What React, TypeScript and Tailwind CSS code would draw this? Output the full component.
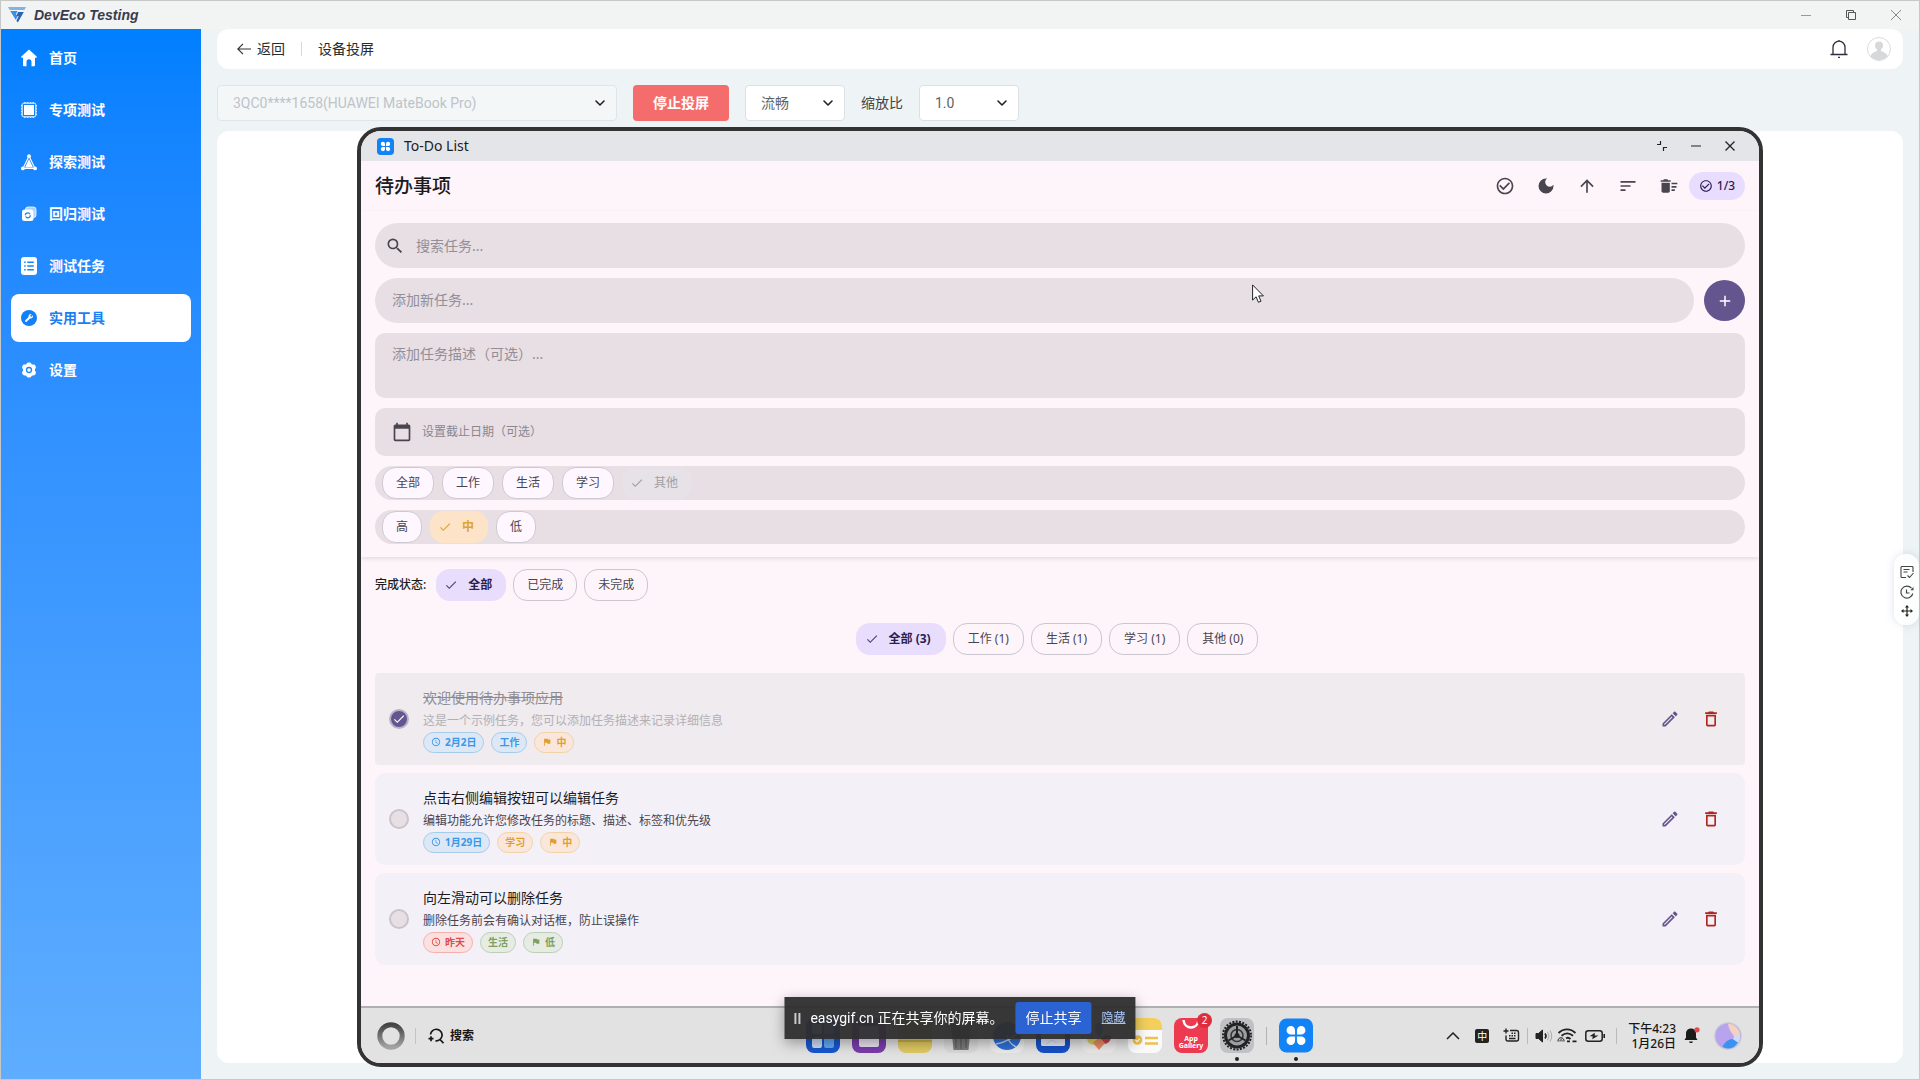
import React from "react";
import {
  MdAccessTime,
  MdAdd,
  MdArrowUpward,
  MdCalendarToday,
  MdCheck,
  MdCheckCircleOutline,
  MdDarkMode,
  MdDeleteOutline,
  MdDeleteSweep,
  MdFlag,
  MdOutlineEdit,
  MdSearch,
  MdSort,
} from "react-icons/md";
import { FaWrench } from "react-icons/fa";
import { ChevronDown } from "lucide-react";

type IconProps = { className?: string };

/* ---------- sidebar icons ---------- */

function HomeIcon() {
  return (
    <svg viewBox="0 0 16 18" className="h-[18px] w-4" fill="currentColor">
      <path d="M8 .6 15.6 7.4c.6.6.3 1.3-.5 1.3H14v7.6c0 .5-.3.9-.9.9h-2.6v-4.4a2.5 2.5 0 0 0-5 0v4.4H2.9c-.6 0-.9-.4-.9-.9V8.7H.9c-.8 0-1.1-.7-.5-1.3z" />
    </svg>
  );
}

function ChipIcon() {
  return (
    <svg viewBox="0 0 16 16" className="h-4 w-4" fill="none" stroke="currentColor">
      <rect x="1.2" y="1.2" width="13.6" height="13.6" rx="1.5" strokeWidth="1" />
      <rect x="3" y="3" width="10" height="10" fill="currentColor" stroke="none" />
      <path d="M3 .4h1.6M6 .4h1.4M8.8.4h1.4M11.6.4H13M3 15.6h1.6M6 15.6h1.4M8.8 15.6h1.4M11.6 15.6H13M.4 3v1.6M.4 6v1.4M.4 8.8v1.4M.4 11.6V13M15.6 3v1.6M15.6 6v1.4M15.6 8.8v1.4M15.6 11.6V13" strokeWidth=".8" />
    </svg>
  );
}

function ExploreIcon() {
  return (
    <svg viewBox="0 0 16 17" className="h-[17px] w-4" fill="currentColor">
      <path d="M8 2 14 14.4H2z" fill="none" stroke="currentColor" strokeWidth="1.1" />
      <path d="M8 5 12 13.400H4z" />
      <circle cx="8" cy="2.200" r="1.900" />
      <circle cx="1.900" cy="14.400" r="1.900" />
      <circle cx="14.100" cy="14.400" r="1.900" />
    </svg>
  );
}

function RegressionIcon() {
  return (
    <svg viewBox="0 0 16 16" className="h-4 w-4">
      <rect x="4.5" y="1" width="10.5" height="10.5" rx="2.5" fill="#a9d1ff" stroke="white" strokeWidth=".8" />
      <rect x="1" y="3.5" width="11.5" height="11.5" rx="2.5" fill="white" />
      <circle cx="6.800" cy="9.300" r="2.500" fill="none" stroke="#1480fb" strokeWidth="1.200" strokeDasharray="6.500 1.300" />
    </svg>
  );
}

function TaskListIcon() {
  return (
    <svg viewBox="0 0 16 18" className="h-[18px] w-4">
      <rect width="16" height="18" rx="3" fill="white" />
      <path d="M6.3 5.2h6.500M6.300 9h6.500M6.300 12.800h6.500M3.200 5.200h1.500M3.200 9h1.500M3.200 12.800h1.500" stroke="#1684fc" strokeWidth="1.4" />
    </svg>
  );
}

function ToolIcon() {
  return (
    <span className="flex h-4 w-4 items-center justify-center rounded-full bg-[#1281f8] text-white">
      <FaWrench className="h-2 w-2" />
    </span>
  );
}

function GearIcon() {
  return (
    <svg viewBox="0 0 16 16" className="h-4 w-4">
      <path d="M8 .5c1.100 0 2 .3 2.400 1.300.4.700.8.900 1.600.8 1.200-.1 1.900.300 2.500 1.400.6 1 .5 1.900-.2 2.700-.5.700-.5 1.900 0 2.600.7.800.8 1.700.2 2.700-.6 1.100-1.300 1.500-2.500 1.400-.8-.1-1.200.1-1.600.8-.4 1-1.300 1.300-2.400 1.300s-2-.3-2.400-1.300c-.4-.7-.8-.9-1.600-.8-1.200.1-1.900-.3-2.500-1.400-.6-1-.5-1.900.2-2.700.5-.7.5-1.900 0-2.600C1 5.900.9 5 1.500 4 2.100 2.900 2.800 2.500 4 2.600c.8.1 1.200-.1 1.600-.8C6 .8 6.900.5 8 .5z" fill="white" />
      <circle cx="8" cy="8" r="2.5" fill="none" stroke="#1a88fd" strokeWidth="1.3" />
    </svg>
  );
}

const NAV = [
  { label: "首页", icon: <HomeIcon /> },
  { label: "专项测试", icon: <ChipIcon /> },
  { label: "探索测试", icon: <ExploreIcon /> },
  { label: "回归测试", icon: <RegressionIcon /> },
  { label: "测试任务", icon: <TaskListIcon /> },
  { label: "实用工具", icon: <ToolIcon />, active: true },
  { label: "设置", icon: <GearIcon /> },
];

function Sidebar() {
  return (
    <nav className="flex w-[200px] shrink-0 flex-col gap-1 bg-gradient-to-b from-[#007fff] to-[#5eadff] px-2.5 pt-[5px]">
      {NAV.map((item) => (
        <a
          key={item.label}
          href="#"
          className={
            item.active
              ? "flex h-12 items-center gap-3 rounded-lg bg-white px-2.5 text-sm font-bold text-[#1a7ff0]"
              : "flex h-12 items-center gap-3 rounded-lg px-2.5 text-sm font-bold text-white"
          }
        >
          {item.icon}
          {item.label}
        </a>
      ))}
    </nav>
  );
}

/* ---------- window chrome ---------- */

function TitleBar() {
  return (
    <header className="flex h-7 items-center bg-[#f2f4f3] pr-[18px] pl-[7px]">
      <svg viewBox="0 0 18 16" className="mr-2 h-4 w-[18px]">
        <path d="M0 0h18l-1.600 3H1.700z" fill="#7fb4e6" />
        <path d="M2.300 4h7.200L8 7 9.500 9.500 7.800 13z" fill="#3f8fe0" />
        <path d="M10 5h5.800L9.800 15.500 8.400 13.800l2.300-4.500H8.400z" fill="#2b62b8" />
      </svg>
      <span className="flex-1 font-['Liberation_Sans',sans-serif] text-sm font-bold text-[#3a3b4e] italic">DevEco Testing</span>
      <div className="flex items-center gap-[35px]">
        <button aria-label="最小化">
          <svg viewBox="0 0 10 10" className="h-2.5 w-2.5" stroke="#999" fill="none"><path d="M0 5.500h10" /></svg>
        </button>
        <button aria-label="还原">
          <svg viewBox="0 0 10 10" className="h-2.5 w-2.5" stroke="#555" fill="none"><path d="M2.500 2.500h7v7h-7zM2 7.500H.5v-7h7V2" /></svg>
        </button>
        <button aria-label="关闭">
          <svg viewBox="0 0 10 10" className="h-2.5 w-2.5" stroke="#888" fill="none"><path d="m0 0 10 10M10 0 0 10" /></svg>
        </button>
      </div>
    </header>
  );
}

function PageHeader() {
  return (
    <div className="flex h-10 items-center rounded-xl bg-white pr-3 pl-5 text-sm text-[#2b2b2b]">
      <button className="flex items-center gap-1.5">
        <svg viewBox="0 0 14 12" className="h-3 w-3.5" fill="none" stroke="#333" strokeWidth="1.2"><path d="M14 6H1M6 .8.800 6 6 11.200" /></svg>
        返回
      </button>
      <span className="mx-4 h-3.5 w-px bg-[#d9d9d9]" />
      <h1 className="flex-1">设备投屏</h1>
      <button aria-label="通知" className="mr-[19px]">
        <svg viewBox="0 0 18 18" className="h-[18px] w-[18px]" fill="none" stroke="#2d2d3d" strokeWidth="1.3"><path d="M.5 14.500h17M3 14.500V7.200a6 6 0 0 1 12 0v7.300M8 .800h2M8 17.300h2" /></svg>
      </button>
      <button aria-label="账户">
        <svg viewBox="0 0 24 24" className="h-6 w-6">
          <circle cx="12" cy="12" r="11.5" fill="white" stroke="#d8dadc" />
          <circle cx="12" cy="8.500" r="4" fill="#d6d8da" />
          <path d="M3.500 19c1-3 4-4.200 6.500-5V11h4v3c2.500.8 5.500 2 6.500 5a11 11 0 0 1-17 0z" fill="#d6d8da" />
        </svg>
      </button>
    </div>
  );
}

function SelectBox({ value, label, wrap, disabled }: { value: string; label: string; wrap: string; disabled?: boolean }) {
  return (
    <div className={`relative ${wrap}`}>
      <select
        aria-label={label}
        disabled={disabled}
        className="h-9 w-full appearance-none rounded border border-[#dcdfe6] bg-white px-[15px] font-['Roboto','Noto_Sans_CJK_SC',sans-serif] text-sm text-[#606266] disabled:border-[#e1e5e9] disabled:bg-[#f3f7f8] disabled:text-[#bfc3c9] disabled:opacity-100"
      >
        <option>{value}</option>
      </select>
      <ChevronDown className="pointer-events-none absolute top-2.5 right-[9px] h-4 w-4 text-[#222]" strokeWidth={2.4} />
    </div>
  );
}

function Controls() {
  return (
    <div className="flex items-center gap-4">
      <SelectBox label="设备" value="3QC0****1658(HUAWEI MateBook Pro)" wrap="w-[400px]" disabled />
      <button className="h-9 w-24 rounded bg-[#f56c6c] text-sm font-bold text-white">停止投屏</button>
      <SelectBox label="画质" value="流畅" wrap="w-[100px]" />
      <div className="flex items-center gap-4">
        <span className="text-sm text-[#444]">缩放比</span>
        <SelectBox label="缩放比" value="1.0" wrap="w-[100px]" />
      </div>
    </div>
  );
}

/* ---------- mirrored to-do app ---------- */

function CloverIcon({ className }: IconProps) {
  return (
    <svg viewBox="0 0 36 36" className={className}>
      <rect width="36" height="36" rx="8" fill="#1283f6" />
      <g fill="white">
        <path d="M17 17h-4.500a4.500 4.500 0 1 1 4.500-4.500zM19 17h4.500a4.500 4.500 0 1 0-4.500-4.500zM17 19h-4.500a4.500 4.500 0 1 0 4.500 4.500zM19 19h4.500a4.500 4.500 0 1 1-4.500 4.500z" />
      </g>
    </svg>
  );
}

function AppTitleBar() {
  return (
    <div className="flex h-[30px] items-center bg-[#e3e5e9] pr-6 pl-4">
      <CloverIcon className="mr-2.5 h-[17px] w-[17px]" />
      <span className="flex-1 text-sm text-[#1c1c1e]">To-Do List</span>
      <div className="flex items-center gap-6">
        <button aria-label="缩小窗口">
          <svg viewBox="0 0 10 10" className="h-2.5 w-2.5" fill="none" stroke="#222" strokeWidth="1.2"><path d="M0 3.500h3.500V0M6.500 10V6.500H10" /></svg>
        </button>
        <button aria-label="最小化应用">
          <svg viewBox="0 0 10 10" className="h-2.5 w-2.5" fill="none" stroke="#222" strokeWidth="1.2"><path d="M0 5h10" /></svg>
        </button>
        <button aria-label="关闭应用">
          <svg viewBox="0 0 10 10" className="h-2.5 w-2.5" fill="none" stroke="#222" strokeWidth="1.3"><path d="m.5.500 9 9M9.500.500l-9 9" /></svg>
        </button>
      </div>
    </div>
  );
}

function AppHeader() {
  return (
    <div className="flex h-[50px] items-center px-3.5">
      <h2 className="flex-1 text-[19px] font-medium text-[#1d1b20]">待办事项</h2>
      <div className="flex items-center gap-[21px] text-[#49454f]">
        <button aria-label="全部完成"><MdCheckCircleOutline className="h-5 w-5" /></button>
        <button aria-label="深色模式"><MdDarkMode className="h-5 w-5" /></button>
        <button aria-label="升序"><MdArrowUpward className="h-5 w-5" /></button>
        <button aria-label="排序"><MdSort className="h-5 w-5" /></button>
        <button aria-label="清除已完成"><MdDeleteSweep className="h-5 w-5" /></button>
      </div>
      <span className="ml-2.5 flex h-7 w-14 items-center justify-center gap-1 rounded-full bg-[#e9ddff] text-xs font-medium text-[#2b1b54]">
        <MdCheckCircleOutline className="h-3.5 w-3.5" />
        1/3
      </span>
    </div>
  );
}

function Chip({ label, kind, roomy }: { label: string; kind?: "solid" | "disabled" | "amber" | "selected"; roomy?: boolean }) {
  const base = "flex h-8 items-center rounded-[14px] border text-xs";
  const pad = roomy ? "px-3.5" : "px-[13px]";
  const checkPad = roomy ? "gap-2.5 pr-3.5 pl-2" : "gap-2.5 pr-[13px] pl-[7px]";
  if (kind === "solid") return <button type="button" className={`${base} ${pad} border-[#cfc9d3] bg-[#fef7ff] text-[#49454f]`}>{label}</button>;
  if (kind === "disabled")
    return (
      <button type="button" disabled className={`${base} ${checkPad} border-transparent bg-[#e7e2e8] text-[#a19ea4]`}>
        <MdCheck className="h-3.5 w-3.5" />
        {label}
      </button>
    );
  if (kind === "amber")
    return (
      <button type="button" className={`${base} ${checkPad} border-transparent bg-[#fde4c8] font-bold text-[#dfa52e]`}>
        <MdCheck className="h-3.5 w-3.5" />
        {label}
      </button>
    );
  if (kind === "selected")
    return (
      <button type="button" className={`${base} ${checkPad} border-transparent bg-[#e9ddfd] font-bold text-[#2a1f4e]`}>
        <MdCheck className="h-3.5 w-3.5 text-[#4f4378]" />
        {label}
      </button>
    );
  return <button type="button" className={`${base} ${pad} border-[#cbc6d0] text-[#49454f]`}>{label}</button>;
}

function TaskForm() {
  const field = "bg-[#e7dfe4] text-[#49454f]";
  return (
    <form className="flex flex-col gap-2.5 px-3.5 pt-3 pb-[13px] shadow-[0_2px_4px_rgba(0,0,0,0.10)]">
      <label className={`flex h-[45px] items-center gap-[11px] rounded-full px-2.5 ${field}`}>
        <MdSearch className="h-5 w-5" />
        <input aria-label="搜索任务" placeholder="搜索任务..." className="flex-1 bg-transparent text-sm outline-none placeholder:text-[#938e97]" />
      </label>
      <div className="flex items-center gap-2.5">
        <input aria-label="添加新任务" placeholder="添加新任务..." className={`h-[45px] flex-1 rounded-full px-[17px] pb-0.5 text-sm outline-none placeholder:text-[#938e97] ${field}`} />
        <button type="button" aria-label="添加" className="flex h-[41px] w-[41px] items-center justify-center rounded-full bg-[#65558f] text-white">
          <MdAdd className="h-[18px] w-[18px]" />
        </button>
      </div>
      <textarea aria-label="任务描述" placeholder="添加任务描述（可选）..." className={`block h-[65px] resize-none rounded-[10px] px-[17px] py-[11px] text-sm outline-none placeholder:text-[#938e97] ${field}`} />
      <button type="button" className={`flex h-12 items-center gap-2.5 rounded-[10px] px-[17px] text-left text-xs ${field}`}>
        <MdCalendarToday className="h-5 w-5" />
        <span className="text-[#8b868f]">设置截止日期（可选）</span>
      </button>
      <div className={`flex h-[34px] items-center gap-2 rounded-full px-[7px] ${field}`}>
        <Chip label="全部" kind="solid" />
        <Chip label="工作" kind="solid" />
        <Chip label="生活" kind="solid" />
        <Chip label="学习" kind="solid" />
        <Chip label="其他" kind="disabled" />
      </div>
      <div className={`flex h-[34px] items-center gap-2 rounded-full px-[7px] ${field}`}>
        <Chip label="高" kind="solid" />
        <Chip label="中" kind="amber" />
        <Chip label="低" kind="solid" />
      </div>
    </form>
  );
}

type Tone = "blue" | "amber" | "red" | "green";
const TONES: Record<Tone, string> = {
  blue: "border-[#a6cbe9] bg-[#dce8f6] text-[#3b97e8]",
  amber: "border-[#f1d3a5] bg-[#fbe6dc] text-[#dfa02e]",
  red: "border-[#f3b0ad] bg-[#fbe0e0] text-[#df4a4a]",
  green: "border-[#bccfb4] bg-[#e6ece4] text-[#7da05e]",
};

function Tag({ tone, icon, children }: { tone: Tone; icon?: "clock" | "flag"; children: React.ReactNode }) {
  return (
    <span className={`flex h-[21px] items-center gap-1 rounded-full border px-[7px] text-[10px] font-bold ${TONES[tone]}`}>
      {icon === "clock" && <MdAccessTime className="h-2.5 w-2.5" />}
      {icon === "flag" && <MdFlag className="h-2.5 w-2.5" />}
      {children}
    </span>
  );
}

type Task = { title: string; desc: string; done?: boolean; tags: { tone: Tone; icon?: "clock" | "flag"; text: string }[] };

const TASKS: Task[] = [
  {
    title: "欢迎使用待办事项应用",
    desc: "这是一个示例任务，您可以添加任务描述来记录详细信息",
    done: true,
    tags: [
      { tone: "blue", icon: "clock", text: "2月2日" },
      { tone: "blue", text: "工作" },
      { tone: "amber", icon: "flag", text: "中" },
    ],
  },
  {
    title: "点击右侧编辑按钮可以编辑任务",
    desc: "编辑功能允许您修改任务的标题、描述、标签和优先级",
    tags: [
      { tone: "blue", icon: "clock", text: "1月29日" },
      { tone: "amber", text: "学习" },
      { tone: "amber", icon: "flag", text: "中" },
    ],
  },
  {
    title: "向左滑动可以删除任务",
    desc: "删除任务前会有确认对话框，防止误操作",
    tags: [
      { tone: "red", icon: "clock", text: "昨天" },
      { tone: "green", text: "生活" },
      { tone: "green", icon: "flag", text: "低" },
    ],
  },
];

function TaskCard({ task }: { task: Task }) {
  return (
    <li className={task.done ? "flex h-[92px] items-center rounded-[4px] bg-[#efebef] pr-6 pl-3.5" : "flex h-[92px] items-center rounded-[10px] bg-[#f3f0f8] pr-6 pl-3.5"}>
      <label className="relative mr-3.5 flex h-5 w-5 shrink-0">
        <input
          type="checkbox"
          defaultChecked={task.done}
          aria-label={task.title}
          className="h-5 w-5 appearance-none rounded-full border-2 border-[#c9c4cb] bg-[#e7dfe4] checked:border-[#b9b2c8] checked:bg-[#65558f]"
        />
        {task.done && <MdCheck className="pointer-events-none absolute top-[3px] left-[3px] h-3.5 w-3.5 text-white" />}
      </label>
      <div className="flex flex-1 flex-col">
        <h3 className={task.done ? "text-sm leading-6 text-[#8f8c92] line-through" : "text-sm leading-6 text-[#1d1b20]"}>{task.title}</h3>
        <p className={task.done ? "text-xs leading-[22px] text-[#b3b0b5]" : "text-xs leading-[22px] text-[#49454f]"}>{task.desc}</p>
        <div className="flex gap-[7px]">
          {task.tags.map((t) => (
            <Tag key={t.text} tone={t.tone} icon={t.icon}>{t.text}</Tag>
          ))}
        </div>
      </div>
      <div className="flex items-center gap-[21px]">
        <button aria-label={`编辑 ${task.title}`} className="text-[#65558f]"><MdOutlineEdit className="h-5 w-5" /></button>
        <button aria-label={`删除 ${task.title}`} className="text-[#b3261e]"><MdDeleteOutline className="h-5 w-5" /></button>
      </div>
    </li>
  );
}

function TaskSection() {
  return (
    <div className="flex-1 px-3.5 pt-3 pb-10">
      <div className="flex items-center gap-[7px]">
        <span className="mr-[3px] text-xs font-medium text-[#1d1b20]">完成状态:</span>
        <Chip label="全部" kind="selected" />
        <Chip label="已完成" />
        <Chip label="未完成" />
      </div>
      <div className="mt-[22px] mb-[18px] flex items-center justify-center gap-[7px] pr-1.5">
        <Chip label="全部 (3)" kind="selected" roomy />
        <Chip label="工作 (1)" roomy />
        <Chip label="生活 (1)" roomy />
        <Chip label="学习 (1)" roomy />
        <Chip label="其他 (0)" roomy />
      </div>
      <ul className="flex flex-col gap-2">
        {TASKS.map((t) => (
          <TaskCard key={t.title} task={t} />
        ))}
      </ul>
    </div>
  );
}

/* ---------- device task bar ---------- */

const TILE = "h-[35px] w-[34px]";

function DockIcons() {
  return (
    <>
      <svg viewBox="0 0 34 35" className={TILE}>
        <rect width="34" height="35" rx="8" fill="#1757cf" />
        <rect x="6" y="6" width="10" height="10" rx="2" fill="#cfe2fb" />
        <rect x="18" y="6" width="10" height="10" rx="2" fill="#7fb6f7" />
        <rect x="6" y="19" width="10" height="11" rx="2" fill="#cbdcf3" />
        <rect x="18" y="19" width="10" height="11" rx="2" fill="#62a8f5" />
      </svg>
      <svg viewBox="0 0 34 35" className={TILE}>
        <rect width="34" height="35" rx="8" fill="#7a3cab" />
        <rect x="7" y="8" width="20" height="21" rx="2" fill="#ece4f2" />
      </svg>
      <svg viewBox="0 0 34 35" className={TILE}>
        <rect width="34" height="35" rx="8" fill="#dfc962" />
        <path d="M0 23h34" stroke="#c9b24c" strokeWidth="2" />
      </svg>
      <svg viewBox="0 0 34 35" className={TILE}>
        <rect width="34" height="35" rx="8" fill="#d9d9d9" />
        <path d="M7 6h20l-2.500 26h-15z" fill="#7b7b7b" />
        <path d="M12 20v10M17 20v11M22 20v10" stroke="#696969" strokeWidth="2" />
      </svg>
      <svg viewBox="0 0 34 35" className={TILE}>
        <rect width="34" height="35" rx="8" fill="#ececec" />
        <circle cx="17" cy="18" r="14" fill="#2f6fd4" />
        <path d="M6 26C14 25 24 20 30 12M17 17c1 6 5 10 9 12" stroke="#b9d4f7" strokeWidth="1.5" fill="none" />
      </svg>
      <svg viewBox="0 0 34 35" className={TILE}>
        <rect width="34" height="35" rx="8" fill="#1650c8" />
        <rect x="5" y="7" width="24" height="21" rx="1.5" fill="#e4e8f2" />
        <path d="m10 26 6-4 5 3" stroke="#c9d0e2" fill="none" />
      </svg>
      <svg viewBox="0 0 34 35" className={TILE}>
        <rect width="34" height="35" rx="8" fill="#ebe9e8" />
        <path d="M5 21c6-3 10 0 12 4-6 3-11 2-12-4z" fill="#d9cf5a" />
        <path d="M29 18c-6-2-11 1-12 6 6 4 12 1 12-6z" fill="#c93c48" />
        <path d="m17 19 6 6-6 7-6-7z" fill="#e58b62" />
        <path d="M17 4c5 3 6 9 0 15-6-6-5-12 0-15z" fill="#5b8def" />
      </svg>
      <svg viewBox="0 0 34 35" className={TILE}>
        <rect width="34" height="35" rx="8" fill="#fafafa" />
        <path d="M0 12V8a8 8 0 0 1 8-8h18a8 8 0 0 1 8 8v4z" fill="#f3d05c" />
        <circle cx="9.500" cy="22" r="4.800" fill="#eec24a" />
        <path d="m7.500 22 1.600 1.600 2.600-2.800" stroke="white" strokeWidth="1.2" fill="none" />
        <path d="M17 20h13M17 25.500h13" stroke="#eec24a" strokeWidth="2.4" />
      </svg>
      <div className="relative flex h-[35px] w-[34px] flex-col items-center justify-end rounded-lg bg-[#ee3a50] pb-1 text-[7px] leading-[7px] font-bold text-white">
        <svg viewBox="0 0 18 10" className="absolute top-0.5 left-2 h-2.5 w-[18px]" fill="none" stroke="white" strokeWidth="2.5"><path d="M1.500 0c1 10 14 10 15 0" /></svg>
        <span>App</span>
        <span>Gallery</span>
        <span className="absolute -top-[5px] -right-1 flex h-[15px] w-[15px] items-center justify-center rounded-full bg-[#dd2f3b] text-[10px] font-normal">2</span>
      </div>
      <div className="relative flex">
        <svg viewBox="0 0 34 35" className={TILE}>
          <rect width="34" height="35" rx="8" fill="#bfc1c5" />
          <circle cx="17" cy="17.500" r="14" fill="none" stroke="#222" strokeWidth="2" strokeDasharray="2 1.380" />
          <circle cx="17" cy="17.500" r="11.500" fill="#9c9ea2" stroke="#222" strokeWidth="3" />
          <circle cx="17" cy="17.500" r="6" fill="none" stroke="#333" strokeWidth="1.5" />
          <path d="M17 17.500V8M17 17.500l-8.500 5M17 17.500l8.500 5" stroke="#222" strokeWidth="2" />
          <circle cx="17" cy="17.500" r="2.500" fill="#222" />
        </svg>
        <span className="absolute -bottom-2 left-[15px] h-1 w-1 rounded-full bg-[#222]" />
      </div>
      <span className="h-[18px] w-px bg-[#b4b4b4]" />
      <div className="relative flex">
        <CloverIcon className={TILE} />
        <span className="absolute -bottom-2 left-[15px] h-1 w-1 rounded-full bg-[#222]" />
      </div>
    </>
  );
}

function Tray() {
  return (
    <div className="flex flex-1 items-center justify-end pr-[17px]">
      <svg viewBox="0 0 14 8" className="mr-[15px] h-2 w-3.5" fill="none" stroke="#222" strokeWidth="1.5"><path d="m1 7 6-6 6 6" /></svg>
      <span className="mr-3.5 flex h-3.5 w-3.5 items-center justify-center rounded-[2px] bg-[#222] text-[10px] leading-none text-white">中</span>
      <svg viewBox="0 0 17 15" className="mr-[7px] h-[15px] w-[17px]" fill="none" stroke="#222" strokeWidth="1.4">
        <path d="M7 2.500h6.500a2 2 0 0 1 2 2V11a2 2 0 0 1-2 2H5a2 2 0 0 1-2-2V7.500M3 .500v5M.500 3h5M6 10.500h6.500" />
        <path d="M6 7.800h1.500M8.500 7.800H10M11 7.800h1.500M8.500 5.300H10M11 5.300h1.500" />
      </svg>
      <span className="mr-[7px] h-4 w-px bg-[#bbb]" />
      <svg viewBox="0 0 18 14" className="mr-1 h-3.5 w-[18px]" fill="none" stroke="#222">
        <path d="M1 4.500h2.500L7.500 1v12l-4-3.500H1z" fill="#222" />
        <path d="M10 4.500q2 2.500 0 5" strokeWidth="1.6" />
        <path d="M12.500 2.800q3 4.200 0 8.400M15 1.500q3.500 5.500 0 11" stroke="#aaa" />
      </svg>
      <svg viewBox="0 0 20 15" className="mr-2 h-[15px] w-5" fill="none" stroke="#222" strokeWidth="1.8">
        <path d="M1.500 5c5-4.800 12-4.800 17 0M4.500 7.800c3.500-3 8-3 11.500 0M9 10.200c2-1 3-.6 4.500.8" />
        <path d="M1 13.500c-.5-5 6.500-5 6 0M3 13.500c0-2.500 2.200-2.500 2.200 0" strokeWidth="1" />
        <path d="M10 13.300h3M15.500 13.300h4" strokeWidth="1.8" />
      </svg>
      <svg viewBox="0 0 20 12" className="mr-[11px] h-3 w-5" fill="none" stroke="#222" strokeWidth="1.5">
        <rect x=".8" y=".8" width="16.400" height="10.400" rx="2.5" />
        <path d="M19.200 4v4" strokeWidth="1.6" />
        <path d="M9.800 2.800 4.500 6.300h3.200l-.4 3 6.200-3.800h-3.800z" fill="#222" stroke="none" />
      </svg>
      <span className="mr-[11px] h-4 w-px bg-[#bbb]" />
      <time className="mr-2 text-right text-xs leading-[15px] font-medium text-[#161616]">
        下午4:23
        <br />
        1月26日
      </time>
      <svg viewBox="0 0 16 17" className="mr-3.5 h-[17px] w-4">
        <path d="M7 1.500c3.200 0 5 2.300 5 5v4l1.500 2.500H.500L2 10.500v-4c0-2.700 1.800-5 5-5zM5 14.500h4c-.5 2-3.500 2-4 0z" fill="#1c1c1c" />
        <circle cx="13" cy="2.800" r="2.600" fill="#e5484d" />
      </svg>
      <svg viewBox="0 0 28 28" className="h-7 w-7">
        <circle cx="14" cy="14" r="13.200" fill="#b7a3ee" stroke="#c6cbd6" strokeWidth="1.2" />
        <path d="M14 1.800A12.200 12.200 0 0 1 26 15l-6-1c-3-3-5-7-6-12.200z" fill="#f3d2c4" />
        <path d="M20 13.500 26.200 14A12.200 12.200 0 0 1 21 24.200c-2-2-2-6-1-10.700z" fill="#cfd9f8" />
        <path d="M8.500 24.800c2-4.500 5.500-7.500 10-7.800l5.500 3.500c-3.500 6-10 7.500-15.500 4.300z" fill="#3c93ef" />
      </svg>
    </div>
  );
}

function TaskBar() {
  return (
    <footer className="flex h-[57px] items-center border-t-2 border-[#b0afb1] bg-[#e2e2e2]">
      <div className="flex flex-1 items-center pl-4">
        <svg viewBox="0 0 28 28" className="h-7 w-7">
          <defs>
            <linearGradient id="ring" x1="0" y1="0" x2="0" y2="1">
              <stop offset="0" stopColor="#444" />
              <stop offset="1" stopColor="#a3a3a3" />
            </linearGradient>
          </defs>
          <circle cx="14" cy="14" r="11.200" fill="none" stroke="url(#ring)" strokeWidth="5" />
        </svg>
        <span className="mr-3 ml-2.5 h-4 w-px bg-[#c4c4c4]" />
        <button className="flex items-center gap-1.5 text-xs font-bold text-[#161616]">
          <svg viewBox="0 0 16 16" className="h-4 w-4" fill="none" stroke="#161616" strokeWidth="1.7">
            <path d="M2.500 6.500a5.800 5.800 0 1 1 5 6.300M12.500 12l3 3.300" />
            <path d="M3 8.200v5M.500 10.700h5" />
          </svg>
          搜索
        </button>
      </div>
      <div className="flex items-center gap-3">
        <DockIcons />
      </div>
      <Tray />
    </footer>
  );
}

/* ---------- overlays ---------- */

function ShareBar() {
  return (
    <div className="fixed bottom-[41px] left-1/2 flex h-[42px] -translate-x-1/2 items-center bg-[#2d2d2e]/95 px-2.5 font-['Roboto','Noto_Sans_CJK_SC',sans-serif] text-sm text-white shadow-[0_4px_14px_rgba(0,0,0,0.35)]">
      <span className="mr-2.5 h-[11px] w-1.5 border-x-2 border-[#c9c9c9]" />
      <span className="mr-3 whitespace-nowrap">easygif.cn 正在共享你的屏幕。</span>
      <button className="mr-2.5 h-8 w-[76px] rounded-[3px] bg-[#2b63d3]">停止共享</button>
      <a href="#" className="text-xs whitespace-nowrap text-[#a8c7fa] underline">隐藏</a>
    </div>
  );
}

function FloatingTools() {
  return (
    <div className="fixed top-[554px] right-px flex h-[71px] w-[25px] flex-col items-center gap-1.5 rounded-xl bg-white/80 pt-3 shadow-[0_0_8px_rgba(120,140,190,0.25)]">
      <button aria-label="记录">
        <svg viewBox="0 0 14 13" className="h-[13px] w-3.5" fill="none" stroke="#444" strokeWidth="1.1"><path d="M13 6V1.500a1 1 0 0 0-1-1H2a1 1 0 0 0-1 1v9a1 1 0 0 0 1 1h4M3.500 3.500h6M3.500 6h4M7.500 9.500l2 2L13.500 7" /></svg>
      </button>
      <button aria-label="历史">
        <svg viewBox="0 0 14 14" className="h-3.5 w-3.5" fill="none" stroke="#444" strokeWidth="1.2"><path d="M12.800 8.500a6 6 0 1 1-1.300-5.300M6.500 4.500V8H9.500" /><path d="M13.500 2v3.200h-3.200z" fill="#444" stroke="none" /></svg>
      </button>
      <button aria-label="移动">
        <svg viewBox="0 0 12 12" className="h-3 w-3" fill="#222"><path d="M6 0 8 2.500H6.600v2.900h2.900V4L12 6 9.500 8V6.600H6.600v2.900H8L6 12 4 9.500h1.400V6.600H2.500V8L0 6l2.500-2v1.400h2.900V2.500H4z" /></svg>
      </button>
    </div>
  );
}

function MousePointer() {
  return (
    <svg viewBox="0 0 12 20" className="pointer-events-none absolute top-[283px] left-[1251px] h-5 w-3">
      <path d="M.6.900v15.200l3.500-3.300 2.300 5.500 2.600-1.100-2.300-5.300h4.700z" fill="white" stroke="#222" strokeWidth="1" />
    </svg>
  );
}

export default function App() {
  return (
    <div className="relative flex min-h-screen flex-col border border-[#c6c8c8] bg-[#eef4f5] font-['Noto_Sans','Noto_Sans_CJK_SC',sans-serif]">
      <TitleBar />
      <div className="flex flex-1">
        <Sidebar />
        <main className="flex min-w-0 flex-1 flex-col px-4 pb-4">
          <PageHeader />
          <div className="pt-4 pb-2.5">
            <Controls />
          </div>
          <section className="flex flex-1 rounded-xl bg-white px-[140px]">
            <div className="-my-1 flex min-w-0 flex-1 flex-col overflow-hidden rounded-[24px] border-4 border-[#333] bg-[#fef5fb]">
              <AppTitleBar />
              <AppHeader />
              <TaskForm />
              <TaskSection />
              <TaskBar />
            </div>
          </section>
        </main>
      </div>
      <MousePointer />
      <FloatingTools />
      <ShareBar />
    </div>
  );
}
